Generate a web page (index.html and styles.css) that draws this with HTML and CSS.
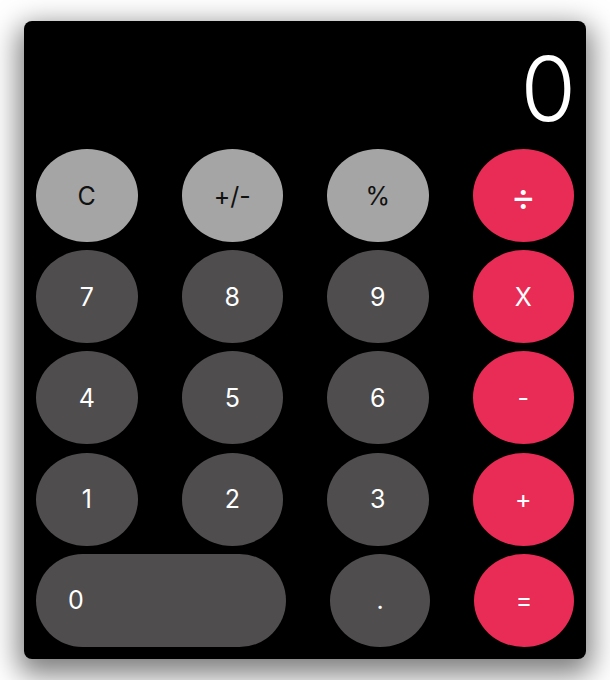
FILE: index.html
```html
<!DOCTYPE html>
<html lang="en">
<head>
<meta charset="utf-8">
<title>Calculator</title>
<link rel="stylesheet" href="styles.css">
</head>
<body>
<div class="calc">
  <div class="display">0</div>
  <div class="keys">
    <button class="key fn">C</button>
    <button class="key fn">+/-</button>
    <button class="key fn">%</button>
    <button class="key op div">÷</button>
    <button class="key num">7</button>
    <button class="key num">8</button>
    <button class="key num">9</button>
    <button class="key op">X</button>
    <button class="key num">4</button>
    <button class="key num">5</button>
    <button class="key num">6</button>
    <button class="key op">-</button>
    <button class="key num">1</button>
    <button class="key num">2</button>
    <button class="key num">3</button>
    <button class="key op">+</button>
    <div class="lastrow">
      <button class="key num zero">0</button>
      <button class="key num">.</button>
      <button class="key op">=</button>
    </div>
  </div>
</div>
</body>
</html>
```
FILE: styles.css
```css
html, body {
  margin: 0;
  background: #ffffff;
}
body {
  padding: 21px 24px;
  font-family: Inter, "Noto Sans", sans-serif;
}
.calc {
  width: 562px;
  height: 638px;
  box-sizing: border-box;
  background: #000;
  border-radius: 8px;
  padding: 12px;
  box-shadow: 0 10px 28px 6px rgba(0, 0, 0, 0.5);
  display: flex;
  flex-direction: column;
}
.display {
  height: 116px;
  box-sizing: border-box;
  padding-top: 11px;
  text-align: right;
  color: #fff;
  font-size: 90px;
  font-weight: 300;
  line-height: 90px;
  margin-right: -2px;
}
.keys {
  display: grid;
  grid-template-columns: repeat(4, 101.5px);
  grid-auto-rows: 93px;
  column-gap: 44px;
  row-gap: 8.2px;
}
.lastrow {
  grid-column: 1 / -1;
  display: grid;
  grid-template-columns: 250px 100px 100px;
  column-gap: 44px;
}
.key {
  border: none;
  margin: 0;
  padding: 0;
  border-radius: 50%;
  font-family: Inter, "Noto Sans", sans-serif;
  font-size: 25px;
  font-weight: 400;
  color: #fff;
  display: flex;
  align-items: center;
  justify-content: center;
  height: 93px;
}
.fn {
  background: #a5a5a5;
  color: #111;
}
.num {
  background: #4f4d4e;
}
.op {
  background: #e82c55;
}
.div {
  font-size: 38px;
  font-weight: 400;
}
.zero {
  border-radius: 47px;
  justify-content: flex-start;
  padding-left: 32px;
}
```
